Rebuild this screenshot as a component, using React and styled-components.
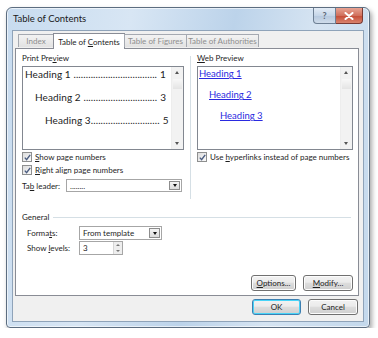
import styled, { createGlobalStyle } from "styled-components"

const GlobalStyle = createGlobalStyle`
  html, body { margin: 0; padding: 0; background: #fff; }
  body { font-family: Lato, "Noto Sans", sans-serif; font-size: 8px; color: #1e1e1e; }
`

const tocLines = [
  { text: "Heading 1 ", indent: 2, dots: 34, page: 1 },
  { text: "Heading 2 ", indent: 12, dots: 30, page: 3 },
  { text: "Heading 3", indent: 22, dots: 28, page: 5 },
]

export default function App() {
  return (
    <>
      <GlobalStyle />
      <Window>
        <TitleBar>
          <Title>Table of Contents</Title>
          <CaptionButtons>
            <HelpButton>?</HelpButton>
            <CloseButton>
              <svg width="10" height="8" viewBox="0 0 10 8">
                <path d="M1.5 1 L8.5 7 M8.5 1 L1.5 7" stroke="#fff" strokeWidth="2" strokeLinecap="round" />
              </svg>
            </CloseButton>
          </CaptionButtons>
        </TitleBar>

        <Client>
          <Tabs>
            <Tab $w={36}><span>Index</span></Tab>
            <ActiveTab><span>Table of <U>C</U>ontents</span></ActiveTab>
            <Tab $w={63}><span>Table of Figures</span></Tab>
            <Tab $w={73}><span>Table of Authorities</span></Tab>
          </Tabs>

          <Panel>
            <TopSection>
              <Column $w={162}>
                <Label>Print Pre<U>v</U>iew</Label>
                <PreviewBox>
                  <PreviewLines>
                    {tocLines.map(l => (
                      <TocLine key={l.page} $indent={l.indent}>
                        <span>{l.text}{".".repeat(l.dots)}</span>
                        <PageNum>{l.page}</PageNum>
                      </TocLine>
                    ))}
                  </PreviewLines>
                  <Scrollbar />
                </PreviewBox>
                <CheckRow>
                  <CheckBox />
                  <span><U>S</U>how page numbers</span>
                </CheckRow>
                <CheckRow>
                  <CheckBox />
                  <span><U>R</U>ight align page numbers</span>
                </CheckRow>
                <FieldRow>
                  <FieldLabel $w={44}>Ta<U>b</U> leader:</FieldLabel>
                  <Select $w={116}>
                    <SelectText>........</SelectText>
                    <DropButton />
                  </Select>
                </FieldRow>
              </Column>

              <Separator />

              <Column $w={157}>
                <Label><U>W</U>eb Preview</Label>
                <PreviewBox>
                  <LinkLines>
                    <WebLink $indent={1}>Heading 1</WebLink>
                    <WebLink $indent={11}>Heading 2</WebLink>
                    <WebLink $indent={22}>Heading 3</WebLink>
                  </LinkLines>
                  <Scrollbar />
                </PreviewBox>
                <CheckRow>
                  <CheckBox />
                  <span>Use <U>h</U>yperlinks instead of page numbers</span>
                </CheckRow>
              </Column>
            </TopSection>

            <GroupHeader>
              <span>General</span>
              <GroupLine />
            </GroupHeader>
            <GroupBody>
              <FieldRow $tight>
                <FieldLabel $w={52}>Forma<U>t</U>s:</FieldLabel>
                <Select $w={83} $h={14}>
                  <SelectText>From template</SelectText>
                  <DropButton />
                </Select>
              </FieldRow>
              <FieldRow $tight>
                <FieldLabel $w={52}>Show <U>l</U>evels:</FieldLabel>
                <Spinner>
                  <SelectText>3</SelectText>
                  <SpinButtons>
                    <SpinHalf $up />
                    <SpinHalf />
                  </SpinButtons>
                </Spinner>
              </FieldRow>
            </GroupBody>

            <PanelButtons>
              <Button $w={45}><span><U>O</U>ptions...</span></Button>
              <Button $w={50}><span><U>M</U>odify...</span></Button>
            </PanelButtons>
          </Panel>

          <DialogButtons>
            <Button $w={49} $default>OK</Button>
            <Button $w={50}>Cancel</Button>
          </DialogButtons>
        </Client>
      </Window>
    </>
  )
}

function CheckBox() {
  return (
    <Box>
      <svg width="7" height="7" viewBox="0 0 7 7">
        <path d="M0.8 3.6 L2.6 5.6 L6.2 0.8" fill="none" stroke="#4b5d80" strokeWidth="1.4" />
      </svg>
    </Box>
  )
}

const Window = styled.div`
box-sizing: border-box;
width: 364px;
height: 321px;
margin: 7px 0 0 6px;
padding: 0 5px 5px 5px;
border: 1px solid #5c6d80;
border-radius: 6px 6px 4px 4px;
background: linear-gradient(100deg, #c7dbef 0%, #d8e6f4 30%, #bcd3ea 55%, #d6e4f2 75%, #c3d8ec 100%);
box-shadow: 2px 3px 5px rgba(0, 0, 0, 0.35), inset 0 0 0 1px rgba(255, 255, 255, 0.6);
display: flex;
flex-direction: column;
`
const TitleBar = styled.div`
height: 22px;
display: flex;
align-items: flex-start;
justify-content: space-between;
`
const Title = styled.div`
margin-top: 5px;
padding-left: 1px;
font-size: 9.5px;
line-height: 11px;
color: #1a1a1a;
`
const CaptionButtons = styled.div`
display: flex;
margin-right: 1px;
`
const HelpButton = styled.div`
box-sizing: border-box;
width: 23px;
height: 16px;
display: flex;
align-items: center;
justify-content: center;
border: 1px solid #6d7f93;
border-top: none;
border-radius: 0 0 0 4px;
background: linear-gradient(#e3ecf6, #c6d6e8 50%, #b5c8de 51%, #cfdcea);
color: #5e6a78;
font-size: 9px;
font-weight: bold;
`
const CloseButton = styled.div`
box-sizing: border-box;
width: 27px;
height: 16px;
display: flex;
align-items: center;
justify-content: center;
border: 1px solid #7a3a33;
border-left: none;
border-top: none;
border-radius: 0 0 4px 0;
background: linear-gradient(#e8a393, #d0705c 50%, #c44a34 51%, #d9836d);
`
const Client = styled.div`
flex: 1;
display: flex;
flex-direction: column;
background: #f0f0f0;
border: 1px solid #8fa3b9;
padding: 2px 4px 0 2px;
`
const Tabs = styled.div`
display: flex;
align-items: flex-end;
height: 15px;
padding-left: 4px;
position: relative;
z-index: 1;
`
const Tab = styled.div`
box-sizing: border-box;
width: ${p => p.$w}px;
height: 13px;
margin-bottom: 1px;
display: flex;
align-items: center;
justify-content: center;
border: 1px solid #a5a9b1;
border-bottom: none;
margin-left: -1px;
background: linear-gradient(#f3f3f3, #e2e2e2);
color: #8e8e8e;
white-space: nowrap;
`
const ActiveTab = styled.div`
box-sizing: border-box;
width: 72px;
height: 16px;
display: flex;
align-items: center;
justify-content: center;
border: 1px solid #898c95;
border-bottom: none;
margin-left: -1px;
margin-bottom: -1px;
background: #fff;
color: #1e1e1e;
white-space: nowrap;
`
const U = styled.span`
text-decoration: underline;
`
const Panel = styled.div`
box-sizing: border-box;
height: 248px;
display: flex;
flex-direction: column;
background: #fff;
border: 1px solid #898c95;
padding: 4px 5px 4px 6px;
`
const TopSection = styled.div`
display: flex;
height: 146px;
`
const Column = styled.div`
width: ${p => p.$w}px;
display: flex;
flex-direction: column;
`
const Separator = styled.div`
width: 1px;
margin: 3px 6px 0 6px;
background: #d5dfe5;
`
const Label = styled.div`
line-height: 10px;
height: 10px;
margin-bottom: 3px;
`
const PreviewBox = styled.div`
box-sizing: border-box;
height: 84px;
display: flex;
border: 1px solid #828790;
background: #fff;
`
const PreviewLines = styled.div`
flex: 1;
min-width: 0;
padding: 0 6px 0 0;
display: flex;
flex-direction: column;
gap: 9px;
font-size: 10px;
line-height: 14px;
color: #222;
`
const TocLine = styled.div`
display: flex;
padding-left: ${p => p.$indent}px;
white-space: nowrap;
letter-spacing: 0.1px;
`
const PageNum = styled.span`
margin-left: auto;
padding-left: 3px;
`
const LinkLines = styled.div`
flex: 1;
padding-top: 1px;
display: flex;
flex-direction: column;
align-items: flex-start;
gap: 9px;
font-size: 9.5px;
line-height: 12px;
`
const WebLink = styled.span`
margin-left: ${p => p.$indent}px;
color: #2a2ae0;
text-decoration: underline;
`
const Scrollbar = styled.div`
width: 11px;
position: relative;
border-left: 1px solid #ededed;
background-image: linear-gradient(#f8f8f8, #e4e4e4);
background-size: 9px 10px;
background-position: 1px 12px;
background-repeat: no-repeat;
background-color: #f2f2f2;
&::before {
  content: "";
  position: absolute;
  left: 3px;
  top: 4px;
  border: 2.5px solid transparent;
  border-bottom: 3px solid #555;
  border-top: none;
}
&::after {
  content: "";
  position: absolute;
  left: 3px;
  bottom: 4px;
  border: 2.5px solid transparent;
  border-top: 3px solid #555;
  border-bottom: none;
}
`
const CheckRow = styled.div`
display: flex;
align-items: center;
gap: 3px;
height: 12px;
margin-top: 1px;
white-space: nowrap;
& + & { margin-top: 1px; }
`
const Box = styled.div`
box-sizing: border-box;
width: 10px;
height: 10px;
display: flex;
align-items: center;
justify-content: center;
border: 1px solid #8e8f8f;
background: linear-gradient(135deg, #dcdcdc, #fbfbfb);
`
const FieldRow = styled.div`
display: flex;
align-items: center;
margin-top: ${p => (p.$tight ? 1 : 3)}px;
`
const FieldLabel = styled.div`
width: ${p => p.$w}px;
white-space: nowrap;
`
const Select = styled.div`
box-sizing: border-box;
width: ${p => p.$w}px;
height: ${p => p.$h || 13}px;
display: flex;
align-items: center;
border: 1px solid #a6a6a6;
background: #fff;
`
const SelectText = styled.div`
flex: 1;
padding-left: 3px;
white-space: nowrap;
`
const DropButton = styled.div`
box-sizing: border-box;
width: 11px;
height: calc(100% - 2px);
margin-right: 1px;
display: flex;
align-items: center;
justify-content: center;
border: 1px solid #8d8d8d;
background: linear-gradient(#f4f4f4, #dcdcdc);
&::after {
  content: "";
  border: 2.5px solid transparent;
  border-top: 3px solid #111;
  border-bottom: none;
}
`
const Spinner = styled.div`
box-sizing: border-box;
width: 44px;
height: 14px;
display: flex;
align-items: center;
border: 1px solid #a6a6a6;
background: #fff;
`
const SpinButtons = styled.div`
width: 9px;
height: 100%;
display: flex;
flex-direction: column;
`
const SpinHalf = styled.div`
flex: 1;
display: flex;
align-items: center;
justify-content: center;
background: #eeeeee;
border-left: 1px solid #d6d6d6;
&::after {
  content: "";
  border: 2px solid transparent;
  ${p => (p.$up ? "border-bottom: 2px solid #777; border-top: none;" : "border-top: 2px solid #777; border-bottom: none;")}
}
`
const GroupHeader = styled.div`
display: flex;
align-items: center;
gap: 4px;
height: 10px;
margin-top: 13px;
`
const GroupLine = styled.div`
flex: 1;
height: 1px;
margin-right: 2px;
background: #d5dfe5;
`
const GroupBody = styled.div`
display: flex;
flex-direction: column;
padding-left: 5px;
margin-top: 3px;
`
const PanelButtons = styled.div`
margin-top: auto;
display: flex;
justify-content: flex-end;
gap: 7px;
`
const Button = styled.div`
box-sizing: border-box;
width: ${p => p.$w}px;
height: 16px;
display: flex;
align-items: center;
justify-content: center;
border: 1px solid ${p => (p.$default ? "#3c7fb1" : "#707070")};
border-radius: 3px;
background: linear-gradient(#f2f2f2, #ebebeb 45%, #dddddd 50%, #cfcfcf);
box-shadow: inset 0 0 0 1px ${p => (p.$default ? "#48d4f8" : "#fcfcfc")};
color: #1e1e1e;
white-space: nowrap;
`
const DialogButtons = styled.div`
display: flex;
justify-content: flex-end;
gap: 7px;
margin-top: 3px;
padding-right: 1px;
`
